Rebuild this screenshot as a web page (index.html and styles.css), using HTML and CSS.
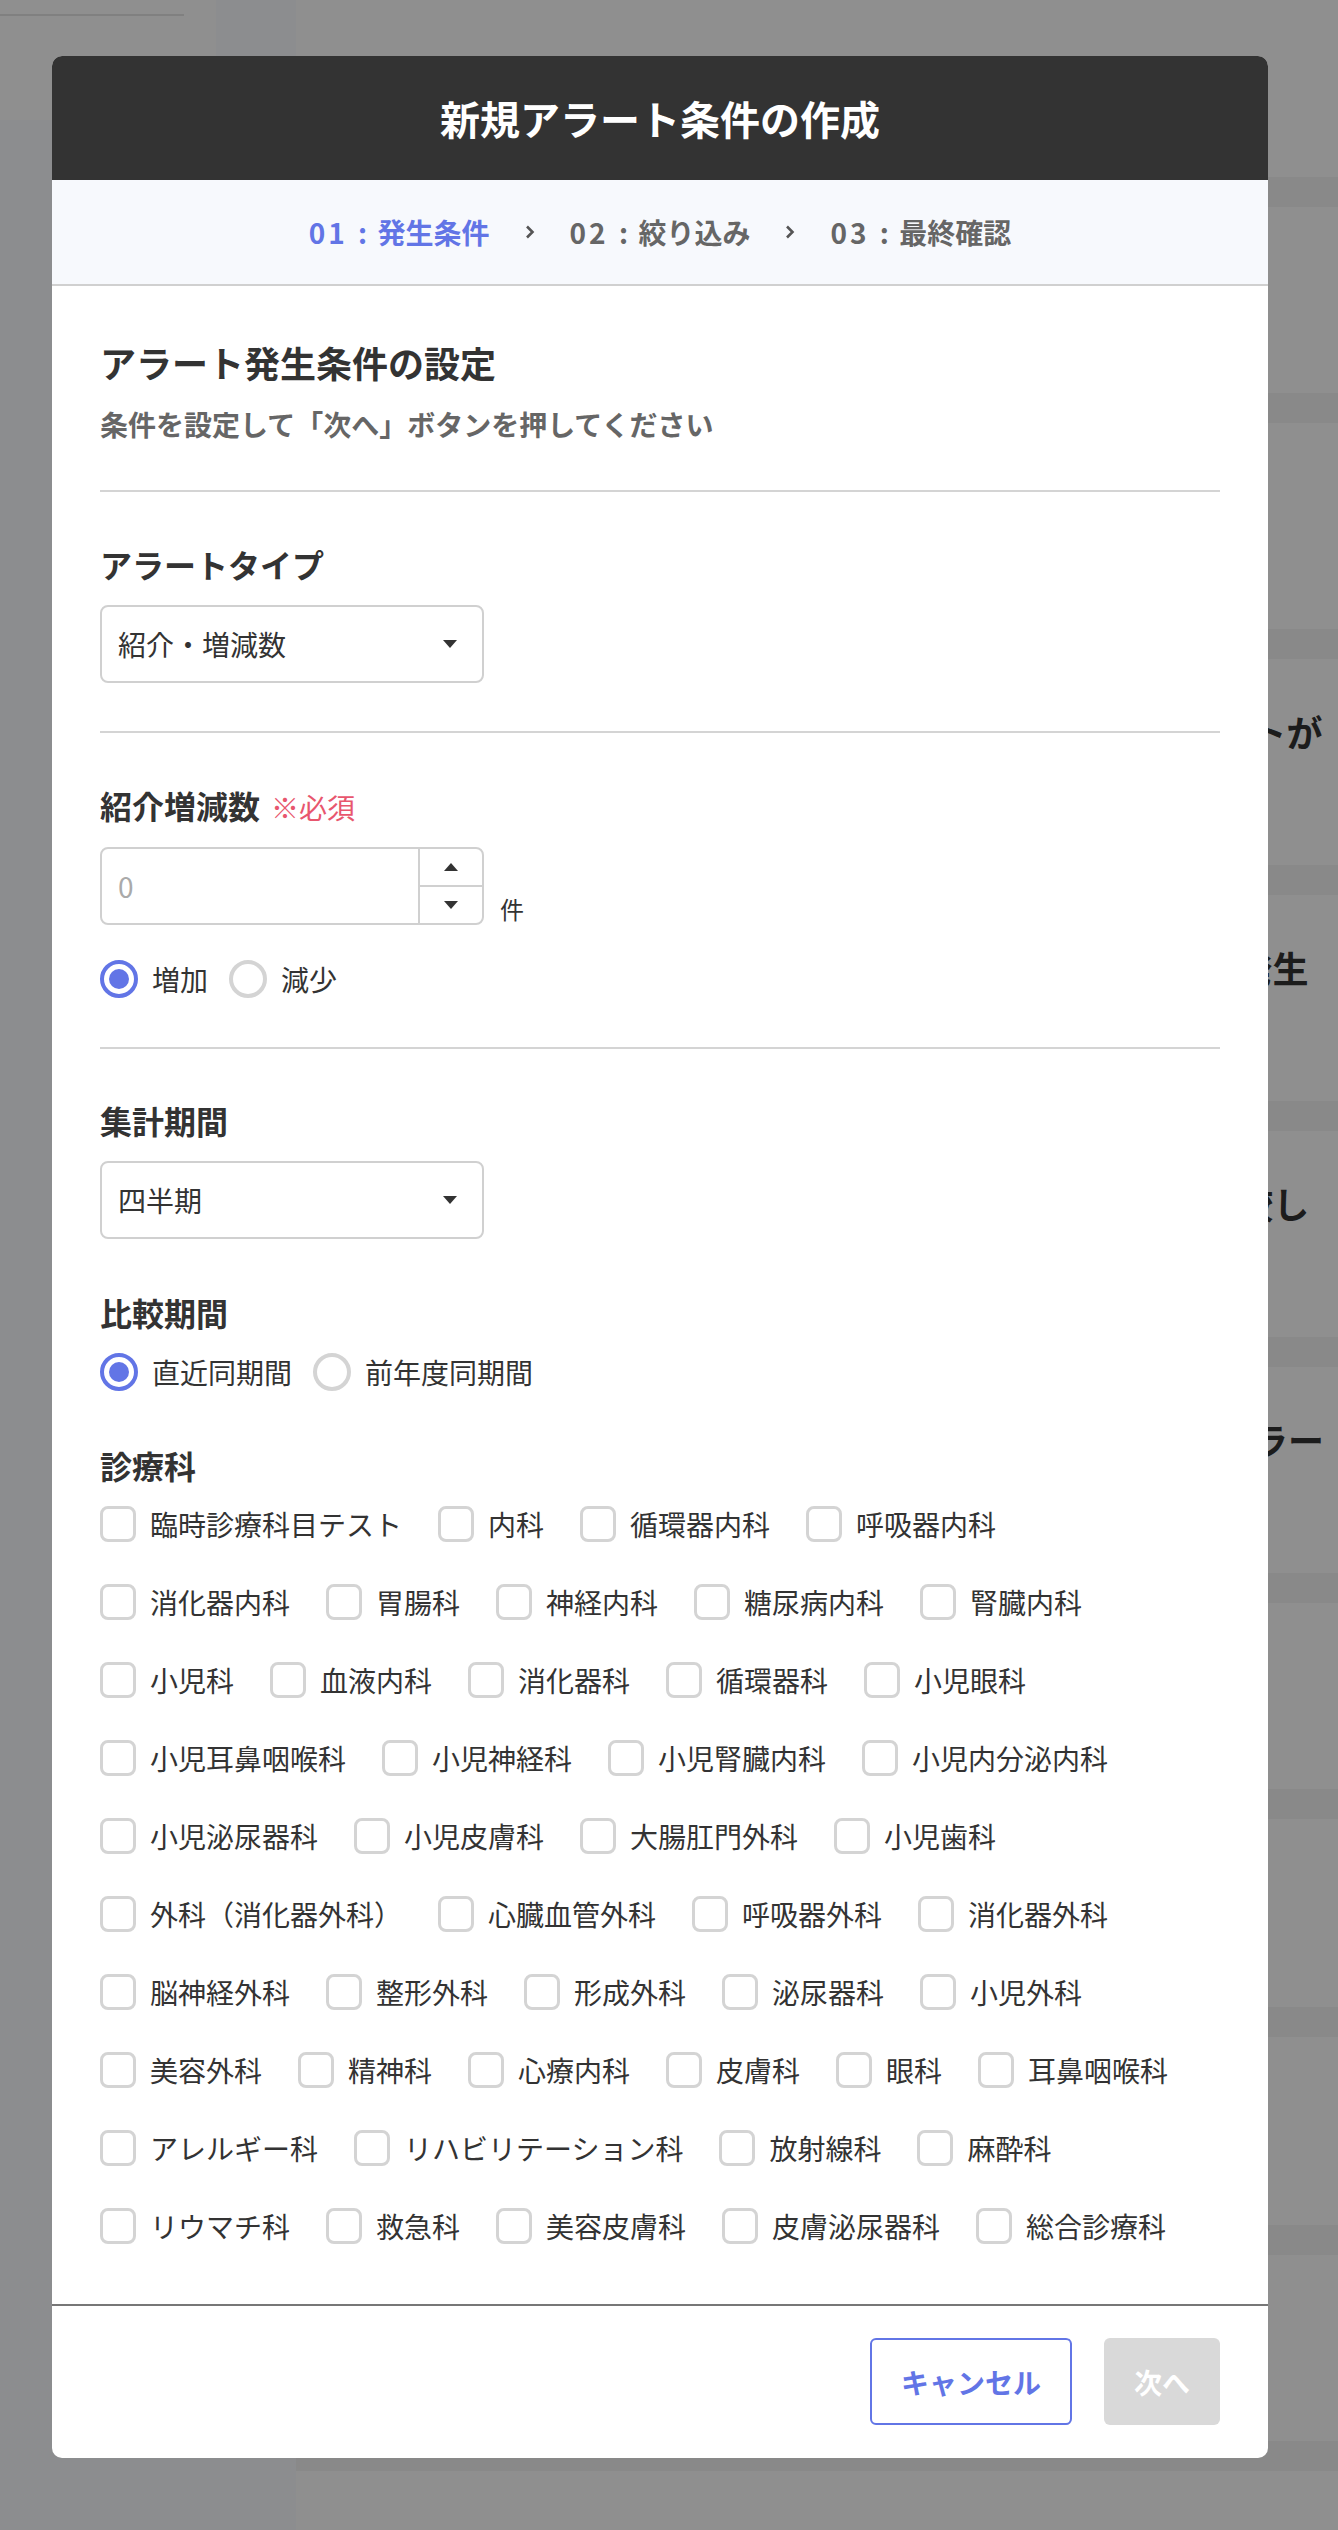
FILE: index.html
```html
<!DOCTYPE html>
<html lang="ja">
<head>
    <meta charset="utf-8">
    <title>新規アラート条件の作成</title>
    <link rel="stylesheet" href="styles.css">
</head>
<body>
    <!-- page behind the dialog -->
    <div class="page">
        <aside class="side">
            <div class="side-logo"><div class="side-rule"></div></div>
        </aside>
        <main class="list">
            <div class="list-head"></div>
            <div class="row short"></div>
            <div class="row"></div>
            <div class="row"><p class="row-title">設定条件で、紹介数が変動した医療機関があるとアラートが</p></div>
            <div class="row"><p class="row-title">直近3ヶ月の紹介数をもとに条件を満たすとアラートが発生</p></div>
            <div class="row"><p class="row-title">選択した期間の紹介数を1年前の同じ期間の実績とも比較し</p></div>
            <div class="row"><p class="row-title">アラート条件の設定に不備がある場合は保存時に入力エラー</p></div>
            <div class="row short"></div>
            <div class="row mid"></div>
            <div class="row mid"></div>
            <div class="row short"></div>
            <div class="row"></div>
        </main>
    </div>

    <div class="backdrop"></div>

    <div class="modal">
        <div class="modal-header">
            <h1>新規アラート条件の作成</h1>
        </div>

        <ol class="steps">
            <li class="step active"><span class="step-no">01</span> : 発生条件</li>
            <li class="step-sep"><svg width="10" height="14" viewBox="0 0 10 14"><polyline points="2,1.5 7.5,7 2,12.5" fill="none" stroke="#555" stroke-width="2.6"/></svg></li>
            <li class="step"><span class="step-no">02</span> : 絞り込み</li>
            <li class="step-sep"><svg width="10" height="14" viewBox="0 0 10 14"><polyline points="2,1.5 7.5,7 2,12.5" fill="none" stroke="#555" stroke-width="2.6"/></svg></li>
            <li class="step"><span class="step-no">03</span> : 最終確認</li>
        </ol>

        <div class="modal-body">
            <section class="intro">
                <h2>アラート発生条件の設定</h2>
                <p class="lead">条件を設定して「次へ」ボタンを押してください</p>
            </section>

            <section class="field">
                <h3>アラートタイプ</h3>
                <div class="select">
                    <span>紹介・増減数</span>
                    <svg width="14" height="8" viewBox="0 0 14 8"><polygon points="0,0 14,0 7,8" fill="#333"/></svg>
                </div>
            </section>

            <section class="field">
                <h3>紹介増減数<span class="req">※必須</span></h3>
                <div class="number">
                    <div class="num-box">
                        <span class="num-value">0</span>
                        <div class="num-spin">
                            <span><svg width="14" height="8" viewBox="0 0 14 8"><polygon points="0,8 14,8 7,0" fill="#333"/></svg></span>
                            <span><svg width="14" height="8" viewBox="0 0 14 8"><polygon points="0,0 14,0 7,8" fill="#333"/></svg></span>
                        </div>
                    </div>
                    <span class="unit">件</span>
                </div>
                <div class="radios">
                    <label class="radio"><span class="radio-mark on"></span>増加</label>
                    <label class="radio"><span class="radio-mark"></span>減少</label>
                </div>
            </section>

            <section class="field last">
                <h3>集計期間</h3>
                <div class="select">
                    <span>四半期</span>
                    <svg width="14" height="8" viewBox="0 0 14 8"><polygon points="0,0 14,0 7,8" fill="#333"/></svg>
                </div>

                <h3 class="gap-label">比較期間</h3>
                <div class="radios">
                    <label class="radio"><span class="radio-mark on"></span>直近同期間</label>
                    <label class="radio"><span class="radio-mark"></span>前年度同期間</label>
                </div>

                <h3 class="gap-label">診療科</h3>
                <div class="checks">
                    <label class="check"><span class="box"></span>臨時診療科目テスト</label>
                    <label class="check"><span class="box"></span>内科</label>
                    <label class="check"><span class="box"></span>循環器内科</label>
                    <label class="check"><span class="box"></span>呼吸器内科</label>
                    <label class="check"><span class="box"></span>消化器内科</label>
                    <label class="check"><span class="box"></span>胃腸科</label>
                    <label class="check"><span class="box"></span>神経内科</label>
                    <label class="check"><span class="box"></span>糖尿病内科</label>
                    <label class="check"><span class="box"></span>腎臓内科</label>
                    <label class="check"><span class="box"></span>小児科</label>
                    <label class="check"><span class="box"></span>血液内科</label>
                    <label class="check"><span class="box"></span>消化器科</label>
                    <label class="check"><span class="box"></span>循環器科</label>
                    <label class="check"><span class="box"></span>小児眼科</label>
                    <label class="check"><span class="box"></span>小児耳鼻咽喉科</label>
                    <label class="check"><span class="box"></span>小児神経科</label>
                    <label class="check"><span class="box"></span>小児腎臓内科</label>
                    <label class="check"><span class="box"></span>小児内分泌内科</label>
                    <label class="check"><span class="box"></span>小児泌尿器科</label>
                    <label class="check"><span class="box"></span>小児皮膚科</label>
                    <label class="check"><span class="box"></span>大腸肛門外科</label>
                    <label class="check"><span class="box"></span>小児歯科</label>
                    <label class="check"><span class="box"></span>外科（消化器外科）</label>
                    <label class="check"><span class="box"></span>心臓血管外科</label>
                    <label class="check"><span class="box"></span>呼吸器外科</label>
                    <label class="check"><span class="box"></span>消化器外科</label>
                    <label class="check"><span class="box"></span>脳神経外科</label>
                    <label class="check"><span class="box"></span>整形外科</label>
                    <label class="check"><span class="box"></span>形成外科</label>
                    <label class="check"><span class="box"></span>泌尿器科</label>
                    <label class="check"><span class="box"></span>小児外科</label>
                    <label class="check"><span class="box"></span>美容外科</label>
                    <label class="check"><span class="box"></span>精神科</label>
                    <label class="check"><span class="box"></span>心療内科</label>
                    <label class="check"><span class="box"></span>皮膚科</label>
                    <label class="check"><span class="box"></span>眼科</label>
                    <label class="check"><span class="box"></span>耳鼻咽喉科</label>
                    <label class="check"><span class="box"></span>アレルギー科</label>
                    <label class="check"><span class="box"></span>リハビリテーション科</label>
                    <label class="check"><span class="box"></span>放射線科</label>
                    <label class="check"><span class="box"></span>麻酔科</label>
                    <label class="check"><span class="box"></span>リウマチ科</label>
                    <label class="check"><span class="box"></span>救急科</label>
                    <label class="check"><span class="box"></span>美容皮膚科</label>
                    <label class="check"><span class="box"></span>皮膚泌尿器科</label>
                    <label class="check"><span class="box"></span>総合診療科</label>
                </div>
            </section>
        </div>

        <div class="modal-footer">
            <button class="btn btn-cancel">キャンセル</button>
            <button class="btn btn-next" disabled>次へ</button>
        </div>
    </div>
</body>
</html>
```

FILE: styles.css
```css
body {
    margin: 0;
    font-family: "Noto Sans CJK JP", "Noto Sans", sans-serif;
    color: #333;
    background-color: #f5f5f5;
    overflow: hidden;
}

/* page behind the dialog */
.page {
    display: flex;
    height: 2530px;
    overflow: hidden;
}

.side {
    width: 296px;
    flex-shrink: 0;
    background-color: #fafcff;
}

.side-logo {
    width: 216px;
    height: 120px;
    padding-top: 14px;
    box-sizing: border-box;
    background-color: #fff;
}

.side-rule {
    width: 184px;
    height: 2px;
    background-color: #e4e4e4;
}

.list {
    flex: 1;
    display: flex;
    flex-direction: column;
    gap: 30px;
    background-color: #f5f5f5;
}

.list-head {
    height: 177px;
    flex-shrink: 0;
    background-color: #fff;
}

.row {
    height: 206px;
    flex-shrink: 0;
    padding: 45px 0 0 56px;
    box-sizing: border-box;
    background-color: #fff;
    overflow: hidden;
}

.row.short {
    height: 186px;
}

.row.mid {
    height: 188px;
}

.row-title {
    margin: 0;
    font-size: 36px;
    line-height: 54px;
    font-weight: 700;
    white-space: nowrap;
}

.backdrop {
    position: fixed;
    top: 0;
    left: 0;
    right: 0;
    bottom: 0;
    background-color: rgba(0, 0, 0, 0.44);
}

/* dialog */
.modal {
    position: absolute;
    top: 56px;
    left: 52px;
    width: 1216px;
    background-color: #fff;
    border-radius: 10px;
    overflow: hidden;
}

.modal-header {
    height: 124px;
    display: flex;
    justify-content: center;
    align-items: center;
    background-color: #333;
}

.modal-header h1 {
    margin: 0;
    font-size: 40px;
    line-height: 1;
    font-weight: 700;
    color: #fff;
}

.steps {
    margin: 0;
    padding: 0;
    list-style: none;
    height: 104px;
    display: flex;
    justify-content: center;
    align-items: center;
    gap: 35px;
    background-color: #f7f9fd;
    border-bottom: 2px solid #d0d0d0;
    font-size: 28px;
    font-weight: 700;
    color: #666;
}

.step {
    word-spacing: 4px;
    white-space: nowrap;
}

.step-no {
    letter-spacing: 3px;
}

.step.active {
    color: #6275e6;
}

.step-sep {
    display: flex;
    align-items: center;
}

.modal-body {
    padding: 50px 48px 54px;
}

.intro {
    padding-bottom: 46px;
    border-bottom: 2px solid #d4d4d4;
}

h2 {
    margin: 0;
    font-size: 36px;
    line-height: 52px;
    font-weight: 700;
}

.lead {
    margin: 16px 0 0;
    font-size: 28px;
    line-height: 40px;
    font-weight: 700;
    color: #666;
}

.field {
    padding: 50px 0 48px;
    border-bottom: 2px solid #d4d4d4;
}

.field.last {
    padding-top: 49px;
    padding-bottom: 0;
    border-bottom: none;
}

h3 {
    margin: 0;
    font-size: 32px;
    line-height: 44px;
    font-weight: 700;
}

h3.gap-label {
    margin-top: 51px;
}

.req {
    margin-left: 11px;
    font-size: 28px;
    font-weight: 400;
    color: #e8566e;
}

.select {
    width: 384px;
    height: 78px;
    margin-top: 19px;
    padding: 0 25px 0 16px;
    box-sizing: border-box;
    display: flex;
    justify-content: space-between;
    align-items: center;
    border: 2px solid #d0d0d0;
    border-radius: 8px;
    font-size: 28px;
}

.number {
    display: flex;
    align-items: flex-end;
    gap: 16px;
    margin-top: 18px;
}

.num-box {
    width: 384px;
    height: 78px;
    box-sizing: border-box;
    display: flex;
    border: 2px solid #d0d0d0;
    border-radius: 8px;
}

.num-value {
    flex: 1;
    display: flex;
    align-items: center;
    padding-left: 16px;
    font-size: 28px;
    color: #aaa;
}

.num-spin {
    width: 62px;
    display: flex;
    flex-direction: column;
    border-left: 2px solid #d0d0d0;
}

.num-spin span {
    flex: 1;
    display: flex;
    justify-content: center;
    align-items: center;
}

.num-spin span:first-child {
    border-bottom: 2px solid #d0d0d0;
}

.unit {
    font-size: 24px;
    line-height: 32px;
}

.radios {
    display: flex;
    align-items: center;
    height: 40px;
    margin-top: 34px;
    font-size: 28px;
}

.field.last .radios {
    margin-top: 18px;
}

.radio {
    display: flex;
    align-items: center;
    gap: 14px;
    margin-right: 21px;
}

.radio-mark {
    width: 38px;
    height: 38px;
    box-sizing: border-box;
    border: 4px solid #d4d4d4;
    border-radius: 50%;
    display: flex;
    justify-content: center;
    align-items: center;
}

.radio-mark.on {
    border-color: #6275e6;
}

.radio-mark.on::after {
    content: "";
    width: 20px;
    height: 20px;
    border-radius: 50%;
    background-color: #6275e6;
}

.checks {
    display: flex;
    flex-wrap: wrap;
    column-gap: 36px;
    row-gap: 30px;
    margin-top: 13px;
}

.check {
    height: 48px;
    display: flex;
    align-items: center;
    gap: 14px;
    font-size: 28px;
    white-space: nowrap;
}

.box {
    width: 36px;
    height: 36px;
    box-sizing: border-box;
    border: 3px solid #d4d4d4;
    border-radius: 8px;
}

.modal-footer {
    display: flex;
    justify-content: flex-end;
    gap: 32px;
    padding: 32px 48px 33px;
    border-top: 2px solid #777;
}

.btn {
    height: 87px;
    box-sizing: border-box;
    border-radius: 6px;
    font-family: inherit;
    font-size: 28px;
    font-weight: 700;
}

.btn-cancel {
    width: 202px;
    border: 2px solid #6275e6;
    background-color: #fff;
    color: #6275e6;
}

.btn-next {
    width: 116px;
    border: none;
    background-color: #d9d9d9;
    color: #fff;
}
```
